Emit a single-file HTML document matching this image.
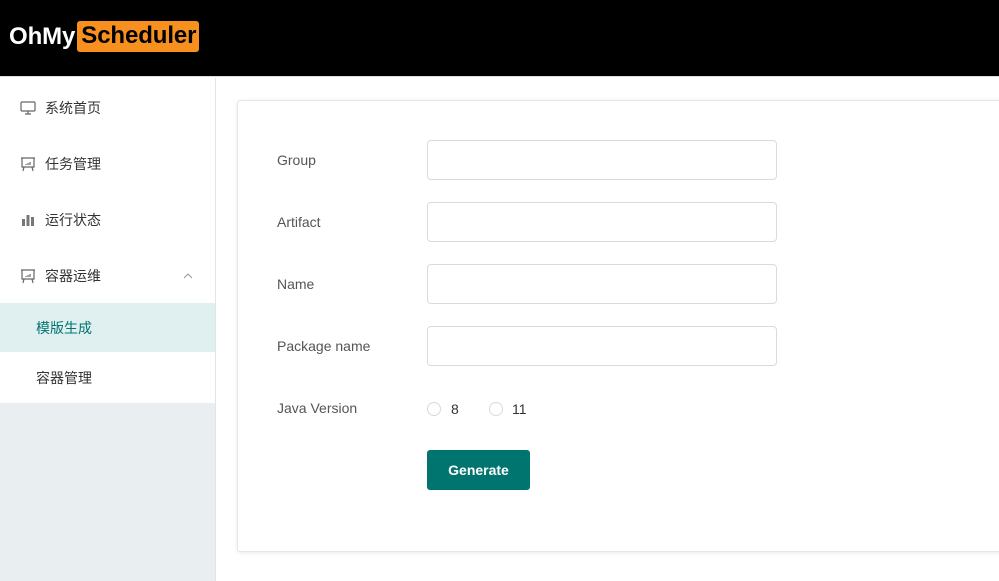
<!DOCTYPE html>
<html><head><meta charset="utf-8"><style>
*{box-sizing:border-box;margin:0;padding:0}
body{width:999px;height:581px;overflow:hidden;background:#fff;font-family:"Liberation Sans","Noto Sans CJK SC",sans-serif;position:relative}
.hdr{position:absolute;left:0;top:0;width:999px;height:77px;background:#000;border-bottom:1px solid #ddd}
.logo{position:absolute;left:9px;top:21px;font-weight:bold;font-size:24px;color:#fff;display:flex;align-items:center;letter-spacing:-0.1px}
.logo span{background:#f7901e;color:#000;border-radius:3px;padding:1px 3px 2px 4px;margin-left:2px}
.side{position:absolute;left:0;top:78px;width:216px;height:503px;background:#e9eef0;border-right:1px solid #e4e4e4}
.menu{background:#fff;height:325px;position:relative}
.it{position:absolute;left:0;width:215px;font-size:14px;color:#333;display:flex;align-items:center}
.it svg{position:absolute;left:20px}
.it .t{position:absolute;left:45px}
.sel{background:#e0f0f0;color:#00756f}
.card{position:absolute;left:237px;top:100px;width:770px;height:452px;border:1px solid #e3e6ea;border-radius:3px;box-shadow:0 1px 4px rgba(0,0,0,.08);background:#fff}
.lbl{position:absolute;left:277px;font-size:14px;color:#555}
.inp{position:absolute;left:427px;width:350px;height:40px;border:1px solid #d9dbe0;border-radius:4px;background:#fff}
.rad{position:absolute;width:14px;height:14px;border:1px solid #d6d9de;border-radius:50%;top:402px}
.rt{position:absolute;top:401px;font-size:14px;color:#333}
.btn{position:absolute;left:427px;top:450px;width:103px;height:40px;background:#00756f;border-radius:3px;color:#fff;font-size:14px;font-weight:600;display:flex;align-items:center;justify-content:center}
</style></head><body>
<div class="hdr"><div class="logo">OhMy<span>Scheduler</span></div></div>
<div class="side"><div class="menu">
<div class="it" style="top:20px;height:20px"><svg width="16" height="16" viewBox="0 0 16 16" fill="none" stroke="#666" stroke-width="1.2"><rect x="1" y="2" width="14" height="9" rx="1"/><path d="M8 11v3M5 14h6"/></svg><span class="t">系统首页</span></div>
<div class="it" style="top:76px;height:20px"><svg width="16" height="16" viewBox="0 0 16 16" fill="none" stroke="#666" stroke-width="1.2"><path d="M1 2h14M2 2v9h12V2M4 11l-1 4M12 11l1 4"/><path d="M6 8v1M8 7v2M10 6v3"/></svg><span class="t">任务管理</span></div>
<div class="it" style="top:132px;height:20px"><svg width="16" height="16" viewBox="0 0 16 16" fill="#777"><rect x="2" y="7" width="3" height="7"/><rect x="6.5" y="3" width="3" height="11"/><rect x="11" y="5" width="3" height="9"/></svg><span class="t">运行状态</span></div>
<div class="it" style="top:188px;height:20px"><svg width="16" height="16" viewBox="0 0 16 16" fill="none" stroke="#666" stroke-width="1.2"><path d="M1 2h14M2 2v9h12V2M4 11l-1 4M12 11l1 4"/><path d="M6 8v1M8 7v2M10 6v3"/></svg><span class="t">容器运维</span><svg style="left:183px" width="10" height="8" viewBox="0 0 10 8" fill="none" stroke="#999" stroke-width="1"><path d="M1 6l4-4 4 4"/></svg></div>
<div class="it sel" style="top:225px;height:49px"><span class="t" style="left:36px">模版生成</span></div>
<div class="it" style="top:290px;height:20px"><span class="t" style="left:36px">容器管理</span></div>
</div></div>
<div class="card"></div>
<div class="lbl" style="top:152px">Group</div><div class="inp" style="top:140px"></div>
<div class="lbl" style="top:214px">Artifact</div><div class="inp" style="top:202px"></div>
<div class="lbl" style="top:276px">Name</div><div class="inp" style="top:264px"></div>
<div class="lbl" style="top:338px">Package name</div><div class="inp" style="top:326px"></div>
<div class="lbl" style="top:400px">Java Version</div>
<div class="rad" style="left:427px"></div><div class="rt" style="left:451px">8</div>
<div class="rad" style="left:489px"></div><div class="rt" style="left:512px">11</div>
<div class="btn">Generate</div>
</body></html>
